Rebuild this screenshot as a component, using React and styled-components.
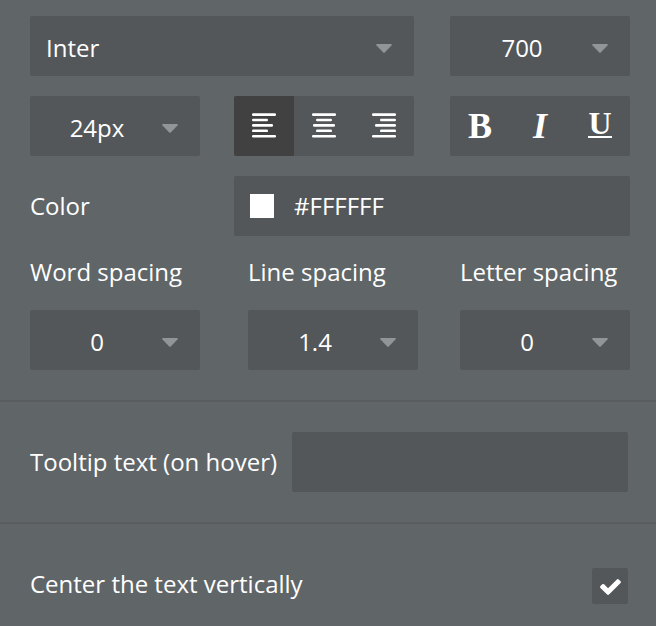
import React, { useState } from 'react';
import styled, { createGlobalStyle } from 'styled-components';

const weights = ['400', '500', '600', '700'];
const sizes = ['16px', '20px', '24px', '32px'];
const fonts = ['Inter', 'Lato', 'Open Sans', 'Roboto'];

// x and width of every bar, top to bottom
const alignBars = {
    left: [[0, 24], [0, 16], [0, 21], [0, 16], [0, 24]],
    center: [[0, 24], [4, 16], [1, 22], [4, 16], [0, 24]],
    right: [[0, 24], [8, 16], [3, 21], [8, 16], [0, 24]],
};

const AlignIcon = ({ type }) => (
    <svg width="24" height="26" viewBox="0 0 24 26" fill="currentColor" aria-hidden="true">
        {alignBars[type].map(([x, width], i) => (
            <rect key={i} x={x} y={0.3 + i * 5.4} width={width} height="2.6" rx="1.2" />
        ))}
    </svg>
);

const Dropdown = ({ id, label, value, options, onChange, align }) => (
    <SelectBox>
        <Select id={id} aria-label={label} value={value} $align={align} onChange={(e) => onChange(e.target.value)}>
            {options.map((option) => <option key={option}>{option}</option>)}
        </Select>
        <Arrow viewBox="0 0 16 9" aria-hidden="true">
            <path d="M1 0H15Q16.3 .4 15.5 1.4L9 8.2Q8 9.2 7 8.2L.5 1.4Q-.3 .4 1 0Z" />
        </Arrow>
    </SelectBox>
);

const App = () => {
    const [font, setFont] = useState('Inter');
    const [weight, setWeight] = useState('700');
    const [size, setSize] = useState('24px');
    const [align, setAlign] = useState('left');
    const [color, setColor] = useState('#FFFFFF');
    const [wordSpacing, setWordSpacing] = useState('0');
    const [lineSpacing, setLineSpacing] = useState('1.4');
    const [letterSpacing, setLetterSpacing] = useState('0');
    const [tooltip, setTooltip] = useState('');
    const [centered, setCentered] = useState(true);

    return (
        <Panel>
            <GlobalStyle />
            <TextSection>
                <Row>
                    <Dropdown label="Font family" value={font} options={fonts} onChange={setFont} align="left" />
                    <Side>
                        <Dropdown label="Font weight" value={weight} options={weights} onChange={setWeight} />
                    </Side>
                </Row>
                <Row>
                    <SizeAndAlign>
                        <Dropdown label="Font size" value={size} options={sizes} onChange={setSize} />
                        <ButtonGroup role="group" aria-label="Text align">
                            {Object.keys(alignBars).map((type) => (
                                <ToolButton
                                    key={type}
                                    type="button"
                                    aria-label={`Align ${type}`}
                                    aria-pressed={align === type}
                                    $active={align === type}
                                    onClick={() => setAlign(type)}
                                >
                                    <AlignIcon type={type} />
                                </ToolButton>
                            ))}
                        </ButtonGroup>
                    </SizeAndAlign>
                    <ButtonGroup role="group" aria-label="Text style">
                        <ToolButton type="button" aria-label="Bold"><b>B</b></ToolButton>
                        <ToolButton type="button" aria-label="Italic"><i>I</i></ToolButton>
                        <ToolButton type="button" aria-label="Underline"><Underlined>U</Underlined></ToolButton>
                    </ButtonGroup>
                </Row>
                <ColorRow>
                    <Label htmlFor="color">Color</Label>
                    <ColorField>
                        <Swatch $color={color} />
                        <ColorInput id="color" type="text" value={color} onChange={(e) => setColor(e.target.value)} />
                    </ColorField>
                </ColorRow>
                <SpacingRow>
                    <Field>
                        <Label htmlFor="word">Word spacing</Label>
                        <Dropdown id="word" value={wordSpacing} options={['0', '1', '2']} onChange={setWordSpacing} />
                    </Field>
                    <Field>
                        <Label htmlFor="line">Line spacing</Label>
                        <Dropdown id="line" value={lineSpacing} options={['1', '1.2', '1.4']} onChange={setLineSpacing} />
                    </Field>
                    <Field>
                        <Label htmlFor="letter">Letter spacing</Label>
                        <Dropdown id="letter" value={letterSpacing} options={['0', '1', '2']} onChange={setLetterSpacing} />
                    </Field>
                </SpacingRow>
            </TextSection>
            <TooltipSection>
                <Label htmlFor="tooltip">Tooltip text (on hover)</Label>
                <TextInput id="tooltip" type="text" value={tooltip} onChange={(e) => setTooltip(e.target.value)} />
            </TooltipSection>
            <CenterSection>
                <Label htmlFor="centered">Center the text vertically</Label>
                <CheckBox>
                    <input id="centered" type="checkbox" checked={centered} onChange={(e) => setCentered(e.target.checked)} />
                    {centered && (
                        <svg viewBox="121 334 1550 1188" aria-hidden="true">
                            <path d="M1671 566q0 40-28 68l-724 724-136 136q-28 28-68 28t-68-28l-136-136-362-362q-28-28-28-68t28-68l136-136q28-28 68-28t68 28l294 295 656-657q28-28 68-28t68 28l136 136q28 28 28 68z" />
                        </svg>
                    )}
                </CheckBox>
            </CenterSection>
        </Panel>
    );
};

export default App;


const GlobalStyle = createGlobalStyle`
    *{
        box-sizing: border-box;
    }
    body{
        margin: 0;
        background-color: #606568;
    }
    button, input, select{
        font: inherit;
        color: inherit;
        margin: 0;
        border: none;
        outline: none;
    }
`;

const Panel = styled.div`
    min-height: 100vh;
    background-color: #606568;
    color: #fff;
    font-family: "Open Sans", sans-serif;
    font-size: 24px;
    line-height: 32px;
`;

const TextSection = styled.section`
    display: flex;
    flex-direction: column;
    gap: 20px;
    padding: 16px 26px 30px 30px;
`;

const TooltipSection = styled.section`
    display: flex;
    align-items: center;
    gap: 15px;
    padding: 30px 28px 30px 30px;
    border-top: 2px solid #595d60;
`;

const CenterSection = styled.section`
    display: flex;
    justify-content: space-between;
    align-items: flex-start;
    padding: 44px 28px 20px 30px;
    border-top: 2px solid #595d60;
`;

const Row = styled.div`
    display: flex;
    gap: 36px;
`;

const Side = styled.div`
    display: flex;
    flex: 0 0 180px;
`;

const SizeAndAlign = styled.div`
    display: flex;
    flex: 1;
    gap: 34px;
`;

const ColorRow = styled.div`
    display: grid;
    grid-template-columns: 170fr 396fr;
    gap: 34px;
    align-items: center;
`;

const SpacingRow = styled.div`
    display: grid;
    grid-template-columns: 218fr 212fr 170px;
`;

const Field = styled.div`
    display: flex;
    flex-direction: column;
    gap: 22px;
    width: 170px;
`;

const Label = styled.label`
    white-space: nowrap;
`;

const SelectBox = styled.div`
    position: relative;
    flex: 1;
    min-width: 0;
`;

const Select = styled.select`
    appearance: none;
    display: block;
    width: 100%;
    height: 60px;
    padding: ${({ $align }) => ($align === 'left' ? '4px 36px 0 16px' : '4px 36px 0 0')};
    border-radius: 2px;
    background-color: #53575a;
    text-align: ${({ $align }) => $align || 'center'};
    text-align-last: ${({ $align }) => $align || 'center'};
    cursor: pointer;
`;

const Arrow = styled.svg`
    position: absolute;
    top: 28px;
    right: 22px;
    width: 16px;
    height: 9px;
    fill: #919597;
    pointer-events: none;
`;

const ButtonGroup = styled.div`
    display: flex;
    flex: 0 0 180px;
    height: 60px;
    border-radius: 2px;
    overflow: hidden;
    background-color: #53575a;
`;

const ToolButton = styled.button`
    display: flex;
    flex: 1;
    justify-content: center;
    align-items: center;
    padding: 0;
    background-color: ${({ $active }) => ($active ? '#414141' : 'transparent')};
    font-family: "Liberation Serif", serif;
    font-size: 36px;
    font-weight: 700;
    cursor: pointer;
`;

const Underlined = styled.span`
    padding-bottom: 4px;
    border-bottom: 2px solid #fff;
    font-size: 32px;
    line-height: 18px;
`;

const ColorField = styled.div`
    display: flex;
    align-items: center;
    gap: 20px;
    height: 60px;
    padding: 0 16px;
    border-radius: 2px;
    background-color: #53575a;
`;

const Swatch = styled.span`
    flex: none;
    width: 24px;
    height: 24px;
    background-color: ${({ $color }) => $color};
`;

const ColorInput = styled.input`
    flex: 1;
    min-width: 0;
    padding: 0;
    background: transparent;
`;

const TextInput = styled.input`
    flex: 1;
    min-width: 0;
    height: 60px;
    padding: 0 16px;
    border-radius: 2px;
    background-color: #53575a;
`;

const CheckBox = styled.span`
    position: relative;
    width: 36px;
    height: 36px;
    input{
        appearance: none;
        display: block;
        width: 100%;
        height: 100%;
        border-radius: 2px;
        background-color: #53575a;
        cursor: pointer;
    }
    svg{
        position: absolute;
        top: 11px;
        left: 8px;
        width: 21px;
        height: 16px;
        fill: #fff;
        pointer-events: none;
    }
`;
